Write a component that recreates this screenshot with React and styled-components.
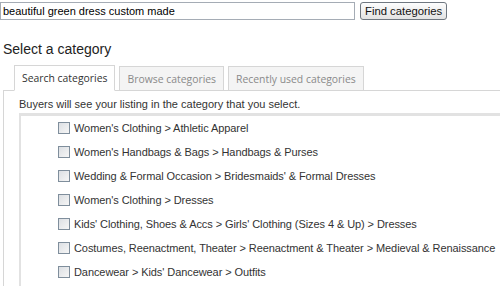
import React, { useState } from "react";
import styled, { createGlobalStyle } from "styled-components";

const categories = [
  "Women's Clothing > Athletic Apparel",
  "Women's Handbags & Bags > Handbags & Purses",
  "Wedding & Formal Occasion > Bridesmaids' & Formal Dresses",
  "Women's Clothing > Dresses",
  "Kids' Clothing, Shoes & Accs > Girls' Clothing (Sizes 4 & Up) > Dresses",
  "Costumes, Reenactment, Theater > Reenactment & Theater > Medieval & Renaissance",
  "Dancewear > Kids' Dancewear > Outfits",
];

const tabs = ["Search categories", "Browse categories", "Recently used categories"];

const GlobalStyle = createGlobalStyle`
  html, body {
    margin: 0;
    padding: 0;
    background: #ffffff;
    overflow: hidden;
  }
  body {
    font-family: Arial, "Liberation Sans", sans-serif;
    color: #333;
  }
`;

const Page = styled.div`
  width: 500px;
  height: 286px;
  overflow: hidden;
`;

const SearchRow = styled.div`
  display: flex;
  align-items: center;
  gap: 5px;
  padding-top: 1px;
`;

const SearchInput = styled.input`
  box-sizing: border-box;
  width: 355px;
  height: 18px;
  margin: 0;
  padding: 0 2px;
  border: 1px solid #a5acb5;
  font-family: "Liberation Sans", Arial, sans-serif;
  font-size: 11px;
  color: #000;
  outline: none;
`;

const FindButton = styled.button`
  box-sizing: border-box;
  height: 18px;
  margin: 1px 0 0;
  padding: 0 4px;
  border: 1px solid #6f7780;
  border-radius: 3px;
  background: linear-gradient(#fdfdfd, #e3e3e3);
  font-family: "Liberation Sans", Arial, sans-serif;
  font-size: 11.3px;
  color: #111;
`;

const Heading = styled.h2`
  margin: 21px 0 0 3px;
  font-family: "Liberation Sans", Arial, sans-serif;
  font-size: 14px;
  font-weight: normal;
  line-height: 16px;
  color: #222;
`;

const TabBar = styled.div`
  display: flex;
  align-items: flex-end;
  gap: 4px;
  margin: 8px 0 0 3px;
  padding-left: 11px;
  height: 25px;
  border-bottom: 1px solid #d6d6d6;
`;

const Tab = styled.div`
  box-sizing: border-box;
  height: ${(p) => (p.$active ? "26px" : "24px")};
  margin-bottom: ${(p) => (p.$active ? "-1px" : "0")};
  padding: 0 7px;
  display: flex;
  align-items: center;
  border: 1px solid #d6d6d6;
  border-bottom: ${(p) => (p.$active ? "1px solid #fff" : "none")};
  background: ${(p) => (p.$active ? "#fff" : "#f4f4f4")};
  font-family: "Open Sans", "DejaVu Sans", sans-serif;
  font-size: 10.4px;
  color: ${(p) => (p.$active ? "#333" : "#8a8a8a")};
`;

const Panel = styled.div`
  margin-left: 3px;
  padding: 6px 0 0 15px;
  border-left: 1px solid #d6d6d6;
`;

const Note = styled.p`
  margin: 0;
  font-family: "Liberation Sans", Arial, sans-serif;
  font-size: 11px;
  line-height: 14px;
  color: #333;
`;

const ListBox = styled.div`
  margin-top: 2px;
  border-top: 3px solid #e2e2e2;
  border-left: 2px solid #e2e2e2;
  padding: 0 0 0 37px;
  height: 200px;
`;

const Item = styled.label`
  display: flex;
  align-items: center;
  gap: 4px;
  height: 24px;
  white-space: nowrap;
  font-family: "Liberation Sans", Arial, sans-serif;
  font-size: 11px;
  letter-spacing: -0.08px;
  color: #333;
`;

const Box = styled.span`
  box-sizing: border-box;
  width: 12px;
  height: 12px;
  flex: none;
  border: 1px solid #7f8e9c;
  background: linear-gradient(135deg, #dcdfe3, #f6f6f6);
`;

export default function App() {
  const [active, setActive] = useState(0);
  return (
    <Page>
      <GlobalStyle />
      <SearchRow>
        <SearchInput defaultValue="beautiful green dress custom made" />
        <FindButton>Find categories</FindButton>
      </SearchRow>
      <Heading>Select a category</Heading>
      <TabBar>
        {tabs.map((t, i) => (
          <Tab key={t} $active={i === active} onClick={() => setActive(i)}>
            {t}
          </Tab>
        ))}
      </TabBar>
      <Panel>
        <Note>Buyers will see your listing in the category that you select.</Note>
        <ListBox>
          {categories.map((c) => (
            <Item key={c}>
              <Box />
              {c}
            </Item>
          ))}
        </ListBox>
      </Panel>
    </Page>
  );
}
